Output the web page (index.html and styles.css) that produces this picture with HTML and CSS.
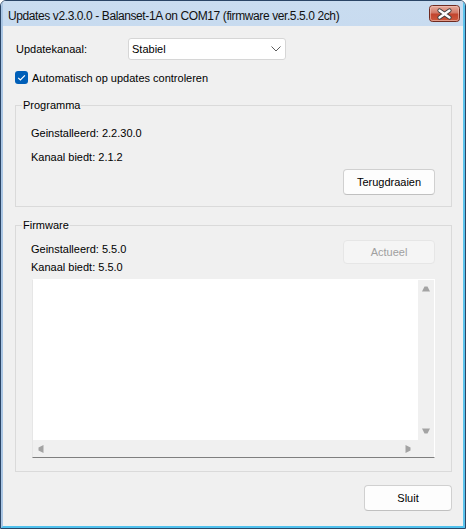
FILE: index.html
```html
<!DOCTYPE html>
<html lang="nl">
<head>
<meta charset="utf-8">
<title>Updates</title>
<link rel="stylesheet" href="styles.css">
</head>
<body>
<div class="window">
  <div class="inner">
    <div class="titlebar">
      <span class="title">Updates v2.3.0.0 - Balanset-1A on COM17 (firmware ver.5.5.0 2ch)</span>
      <div class="close">
        <svg width="31" height="17" viewBox="0 0 31 17">
          <defs>
            <linearGradient id="cg" x1="0" y1="0" x2="0" y2="1">
              <stop offset="0" stop-color="#e9b0a2"/>
              <stop offset="0.45" stop-color="#d27a68"/>
              <stop offset="0.55" stop-color="#c2452e"/>
              <stop offset="1" stop-color="#cf5a3e"/>
            </linearGradient>
          </defs>
          <rect x="0.5" y="0.5" width="30" height="16" rx="3" fill="url(#cg)" stroke="#6e2a20"/>
          <rect x="1.5" y="1.5" width="28" height="14" rx="2" fill="none" stroke="#f0c7bc" stroke-opacity="0.6"/>
          <path d="M10.5 5.5 L20.5 12.5 M20.5 5.5 L10.5 12.5" stroke="#3d3d3d" stroke-width="4.2" stroke-linecap="round"/>
          <path d="M10.5 5.5 L20.5 12.5 M20.5 5.5 L10.5 12.5" stroke="#ffffff" stroke-width="2.4" stroke-linecap="round"/>
        </svg>
      </div>
    </div>
    <div class="client">
      <div class="row-channel">
        <span class="label">Updatekanaal:</span>
        <div class="combo">
          <span>Stabiel</span>
          <svg class="chev" width="10" height="6" viewBox="0 0 10 6"><path d="M0.5 0.5 L5 5 L9.5 0.5" fill="none" stroke="#5c5c5c" stroke-width="1"/></svg>
        </div>
      </div>
      <div class="row-check">
        <span class="checkbox">
          <svg width="13" height="13" viewBox="0 0 13 13"><path d="M3.2 6.8 L5.4 9 L9.9 4.3" fill="none" stroke="#ffffff" stroke-width="1.2"/></svg>
        </span>
        <span>Automatisch op updates controleren</span>
      </div>
      <fieldset class="group group-prog">
        <legend>Programma</legend>
        <div class="line">Geinstalleerd: 2.2.30.0</div>
        <div class="line line-2">Kanaal biedt: 2.1.2</div>
        <div class="btn-row">
          <div class="btn">Terugdraaien</div>
        </div>
      </fieldset>
      <fieldset class="group group-fw">
        <legend>Firmware</legend>
        <div class="fw-top">
          <div class="fw-info">
            <div class="line">Geinstalleerd: 5.5.0</div>
            <div class="line line-fw2">Kanaal biedt: 5.5.0</div>
          </div>
          <div class="btn btn-disabled">Actueel</div>
        </div>
        <div class="textbox">
          <div class="text-area"></div>
          <div class="vscroll">
            <svg width="8" height="6" viewBox="0 0 8 6"><polygon points="2.5,0.5 5.5,0.5 8,5.5 0,5.5" fill="#a3a3a3"/></svg>
            <svg width="8" height="6" viewBox="0 0 8 6"><polygon points="0,0.5 8,0.5 5.5,5.5 2.5,5.5" fill="#a3a3a3"/></svg>
          </div>
          <div class="hscroll">
            <svg width="6" height="8" viewBox="0 0 6 8"><polygon points="0.5,2.5 0.5,5.5 5.5,8 5.5,0" fill="#a3a3a3"/></svg>
            <svg width="6" height="8" viewBox="0 0 6 8"><polygon points="5.5,2.5 5.5,5.5 0.5,8 0.5,0" fill="#a3a3a3"/></svg>
          </div>
          <div class="corner"></div>
        </div>
      </fieldset>
      <div class="btn btn-close">Sluit</div>
    </div>
  </div>
</div>
</body>
</html>
```

FILE: styles.css
```css
* { box-sizing: border-box; }

html, body {
  margin: 0;
  padding: 0;
  background: #ffffff;
}

body {
  font-family: "Liberation Sans", Arial, sans-serif;
  font-size: 11px;
  color: #000000;
}

.window {
  width: 466px;
  height: 529px;
  border: 1px solid #2a4566;
  border-radius: 6px 6px 0 0;
  overflow: hidden;
  display: flex;
}

.inner {
  flex: 1;
  display: flex;
  flex-direction: column;
  border-left: 2px solid #aac6e4;
  border-right: 2px solid #5cc3ec;
  border-bottom: 2px solid #4fc1ee;
  background: linear-gradient(#c9dcf0, #b2cae6);
}

.titlebar {
  height: 25px;
  display: flex;
  align-items: flex-start;
  padding-left: 5px;
}

.title {
  font-size: 12px;
  letter-spacing: -0.4px;
  line-height: 15px;
  margin-top: 8px;
  color: #111111;
  white-space: nowrap;
}

.close {
  margin-left: auto;
  margin-right: 3px;
  margin-top: 4px;
  height: 17px;
  display: flex;
}

.client {
  flex: 1;
  background: #f0f0f0;
  padding: 12px 11px 0 12px;
  display: flex;
  flex-direction: column;
}

.row-channel {
  display: flex;
  align-items: center;
  height: 22px;
}

.label {
  width: 112px;
  margin-left: 1px;
}

.combo {
  width: 158px;
  height: 22px;
  background: #ffffff;
  border: 1px solid #d6d6d6;
  border-radius: 3px;
  display: flex;
  align-items: center;
  padding-left: 3px;
  padding-right: 4px;
}

.chev {
  margin-left: auto;
}

.row-check {
  margin-top: 11px;
  height: 13px;
  display: flex;
  align-items: center;
  gap: 4px;
}

.checkbox {
  width: 13px;
  height: 13px;
  border-radius: 3px;
  background: #005fb8;
  display: flex;
}

.group {
  margin: 0;
  border: 1px solid #dadada;
  min-width: 0;
  padding: 0 16px 0 15px;
}

.group legend {
  padding: 0 1px;
  margin-left: -9px;
  line-height: 14px;
}

.group-prog {
  margin-top: 14px;
  padding-top: 14px;
  padding-bottom: 11px;
}

.line {
  line-height: 14px;
  white-space: nowrap;
}

.line-2 {
  margin-top: 10px;
}

.btn-row {
  margin-top: 5px;
  display: flex;
  justify-content: flex-end;
}

.btn {
  width: 92px;
  height: 26px;
  background: #fdfdfd;
  border: 1px solid #d0d0d0;
  border-bottom-color: #c0c0c0;
  border-radius: 4px;
  display: flex;
  align-items: center;
  justify-content: center;
}

.btn-disabled {
  height: 24px;
  background: #f5f5f5;
  border-color: #e6e6e6;
  color: #a0a0a0;
}

.group-fw {
  margin-top: 11px;
  padding-top: 8px;
  padding-bottom: 13px;
}

.fw-top {
  display: flex;
  justify-content: space-between;
  align-items: flex-start;
}

.fw-info {
  padding-top: 2px;
}

.line-fw2 {
  margin-top: 4px;
}

.textbox {
  margin-top: 5px;
  margin-left: 1px;
  width: 403px;
  height: 179px;
  border: 1px solid #ffffff;
  border-left-color: #e6e6e6;
  border-bottom-color: #7f7f7f;
  background: #f0f0f0;
  display: grid;
  grid-template-columns: 1fr 16px;
  grid-template-rows: 1fr 17px;
}

.text-area {
  background: #ffffff;
}

.vscroll {
  display: flex;
  flex-direction: column;
  justify-content: space-between;
  align-items: center;
  padding: 6px 0 6px 0;
}

.hscroll {
  display: flex;
  justify-content: space-between;
  align-items: center;
  padding: 0 7px 0 5px;
}

.btn-close {
  margin-top: 13px;
  align-self: flex-end;
  width: 88px;
}
```
